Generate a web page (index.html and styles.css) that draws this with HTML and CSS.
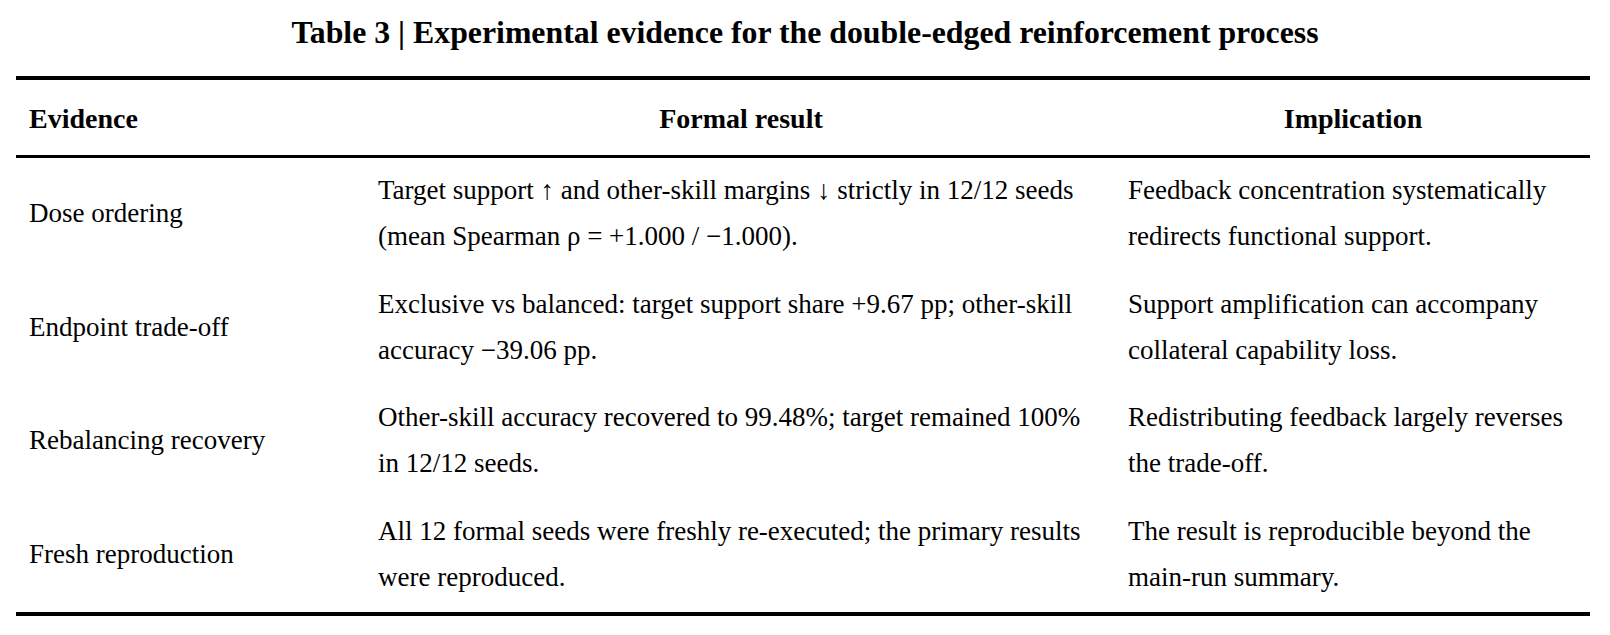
FILE: index.html
```html
<!DOCTYPE html>
<html>
<head>
<meta charset="utf-8">
<link rel="stylesheet" href="styles.css">
</head>
<body>
<div class="page">
  <div class="title">Table 3 | Experimental evidence for the double-edged reinforcement process</div>
  <table class="tbl">
    <colgroup>
      <col class="c1">
      <col class="c2">
      <col class="c3">
    </colgroup>
    <thead>
      <tr>
        <th class="left">Evidence</th>
        <th>Formal result</th>
        <th>Implication</th>
      </tr>
    </thead>
    <tbody>
      <tr>
        <td>Dose ordering</td>
        <td>Target support ↑ and other-skill margins ↓ strictly in 12/12 seeds<br>(mean Spearman ρ = +1.000 / −1.000).</td>
        <td>Feedback concentration systematically<br>redirects functional support.</td>
      </tr>
      <tr>
        <td>Endpoint trade-off</td>
        <td>Exclusive vs balanced: target support share +9.67 pp; other-skill<br>accuracy −39.06 pp.</td>
        <td>Support amplification can accompany<br>collateral capability loss.</td>
      </tr>
      <tr>
        <td>Rebalancing recovery</td>
        <td>Other-skill accuracy recovered to 99.48%; target remained 100%<br>in 12/12 seeds.</td>
        <td>Redistributing feedback largely reverses<br>the trade-off.</td>
      </tr>
      <tr>
        <td>Fresh reproduction</td>
        <td>All 12 formal seeds were freshly re-executed; the primary results<br>were reproduced.</td>
        <td>The result is reproducible beyond the<br>main-run summary.</td>
      </tr>
    </tbody>
  </table>
</div>
</body>
</html>
```

FILE: styles.css
```css
html, body {
  margin: 0;
  padding: 0;
  background: #ffffff;
}
.page {
  width: 1610px;
  padding: 0 20px 0 16px;
  box-sizing: border-box;
  font-family: "Liberation Serif", "Times New Roman", serif;
  color: #000;
}
.title {
  text-align: center;
  font-weight: bold;
  font-size: 31.8px;
  line-height: 36px;
  padding-top: 15px;
  height: 76px;
  box-sizing: border-box;
  padding-left: 4px;
}
.tbl {
  width: 1574px;
  border-collapse: collapse;
  table-layout: fixed;
}
.c1 { width: 350px; }
.c2 { width: 750px; }
.c3 { width: 474px; }
.tbl thead th {
  border-top: 4px solid #000;
  border-bottom: 3px solid #000;
  font-size: 28px;
  font-weight: bold;
  height: 78px;
  padding: 4px 12px 0 12px;
  line-height: 32px;
  text-align: center;
  vertical-align: middle;
  box-sizing: border-box;
}
.tbl thead th.left {
  text-align: left;
  padding-left: 13px;
}
.tbl tbody td {
  font-size: 27px;
  line-height: 46px;
  padding: 9.5px 12px 12px 12px;
  vertical-align: middle;
  text-align: left;
}
.tbl tbody td:first-child {
  padding-left: 13px;
}
.tbl tbody tr:last-child td {
  border-bottom: 4px solid #000;
}
```
